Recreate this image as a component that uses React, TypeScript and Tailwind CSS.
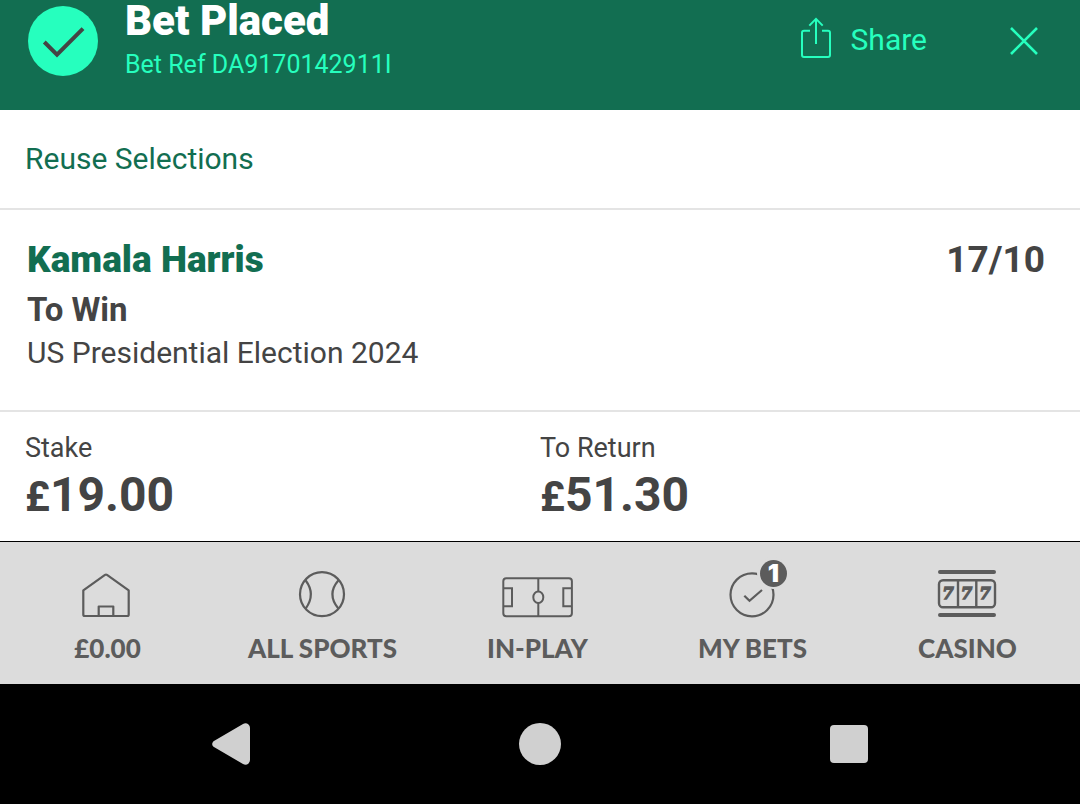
import React from 'react';

interface NavItem {
  label: string;
  icon: React.ReactNode;
  badge?: number;
}

const HomeIcon: React.FC = () => (
  <svg width="75" height="64" viewBox="0 0 75 64" fill="none" stroke="currentColor" strokeWidth="2.2" strokeLinejoin="round" aria-hidden="true">
    <path d="M13.3 34.4 L35 18.9 Q36 18.2 37 18.9 L58.7 34.4 V58.5 Q58.7 60 57.2 60 H14.8 Q13.3 60 13.3 58.5 Z" />
    <path d="M28.7 60 V50.5 H43.3 V60" />
  </svg>
);

const BallIcon: React.FC = () => (
  <svg width="75" height="64" viewBox="0 0 75 64" fill="none" stroke="currentColor" strokeWidth="2.2" aria-hidden="true">
    <circle cx="37" cy="38.2" r="22" />
    <path d="M20.7 24.5 Q31 38.2 20.7 52.5" />
    <path d="M53.3 24.5 Q41.5 38.2 53.3 52.5" />
  </svg>
);

const PitchIcon: React.FC = () => (
  <svg width="75" height="64" viewBox="0 0 75 64" fill="none" stroke="currentColor" strokeWidth="2" aria-hidden="true">
    <rect x="3.3" y="22.3" width="68.6" height="38" rx="3" />
    <path d="M38.3 22.3 V35.5 M38.3 47 V60.3" />
    <ellipse cx="38.3" cy="41.3" rx="5" ry="5.8" />
    <path d="M3.3 32.3 H12 V50.3 H3.3 M71.9 32.3 H63.3 V50.3 H71.9" />
  </svg>
);

const BetsIcon: React.FC = () => (
  <svg width="75" height="64" viewBox="0 0 75 64" fill="none" stroke="currentColor" strokeWidth="2.2" aria-hidden="true">
    <circle cx="37" cy="38.8" r="21.5" />
    <circle cx="58" cy="17" r="16" fill="#dcdcdc" stroke="none" />
    <path d="M29.3 39.7 L34.5 44.8 L47 34" />
  </svg>
);

const SlotsIcon: React.FC = () => (
  <svg width="75" height="64" viewBox="0 0 75 64" fill="none" stroke="currentColor" strokeWidth="2.4" aria-hidden="true">
    <path d="M10 16 H64 M10 59 H64" strokeWidth="4" strokeLinecap="round" />
    <rect x="9" y="24.2" width="56" height="27" rx="4" />
    <path d="M28 24 V51 M46.3 24 V51" />
    <g fill="currentColor" strokeWidth="1.5" fontFamily="DejaVu Serif, serif" fontWeight="700" fontStyle="italic" fontSize="16" textAnchor="middle">
      <text x="18" y="43">7</text>
      <text x="36.5" y="43">7</text>
      <text x="55" y="43">7</text>
    </g>
  </svg>
);

const navItems: NavItem[] = [
  { label: '£0.00', icon: <HomeIcon /> },
  { label: 'ALL SPORTS', icon: <BallIcon /> },
  { label: 'IN-PLAY', icon: <PitchIcon /> },
  { label: 'MY BETS', icon: <BetsIcon />, badge: 1 },
  { label: 'CASINO', icon: <SlotsIcon /> },
];

const Header: React.FC = () => (
  <header className="flex h-[110px] items-start bg-[#126e51] pl-7 pr-10 text-[#26ffbe]">
    <svg className="mt-1.5 shrink-0" width="70" height="70" viewBox="0 0 70 70" fill="none" aria-hidden="true">
      <circle cx="35" cy="35" r="35" fill="#26ffbe" />
      <path d="M16.3 36 L29 48.6 L55 22.6" stroke="#444" strokeWidth="4" />
    </svg>
    <div className="ml-[27px] flex-1">
      <h1 className="text-[42px] leading-[42px] font-black text-white">Bet Placed</h1>
      <p className="mt-1.5 text-[25px] leading-[33px]">Bet Ref DA9170142911I</p>
    </div>
    <button type="button" className="mt-[17px] flex items-start gap-[19px] text-[30px] leading-[46px]">
      <svg width="32" height="42" viewBox="0 0 32 42" fill="none" stroke="currentColor" strokeWidth="2" aria-hidden="true">
        <path d="M10 13.8 H4 Q2 13.8 2 15.8 V38 Q2 40 4 40 H28 Q30 40 30 38 V15.8 Q30 13.8 28 13.8 H22" />
        <path d="M16 27 V2 M9.3 8.6 L16 1.8 L22.7 8.6" />
      </svg>
      Share
    </button>
    <button type="button" aria-label="Close" className="mt-[25px] ml-[81px]">
      <svg width="32" height="32" viewBox="0 0 32 32" fill="none" stroke="currentColor" strokeWidth="2.6" aria-hidden="true">
        <path d="M3 3 L29 29 M29 3 L3 29" />
      </svg>
    </button>
  </header>
);

const Selection: React.FC = () => (
  <section className="flex items-start justify-between border-b-2 border-[#e4e4e4] pt-7 pr-[35px] pb-9 pl-[27px]">
    <div>
      <h2 className="text-[37px] leading-[44px] font-black text-[#126e51]">Kamala Harris</h2>
      <p className="mt-1.5 text-[33px] leading-[44px] font-bold">To Win</p>
      <p className="text-[30px] leading-[42px]">US Presidential Election 2024</p>
    </div>
    <span className="text-[37px] leading-[44px] font-bold">17/10</span>
  </section>
);

const Amount: React.FC<{ label: string; value: string }> = ({ label, value }) => (
  <div>
    <dt className="text-[27px] leading-8">{label}</dt>
    <dd className="text-[48px] leading-[62px] font-bold">
      <span className="text-[42px] leading-none">£</span>
      {value}
    </dd>
  </div>
);

const TabBar: React.FC = () => (
  <nav className="grid grid-cols-5 border-t border-black bg-[#dcdcdc] pt-3.5 pr-[5px] pb-5 font-['Lato',sans-serif] text-[#5c5c5c]">
    {navItems.map((item) => (
      <a key={item.label} href="#" className="flex flex-col items-center">
        <span className="relative">
          {item.icon}
          {item.badge && (
            <span className="absolute top-1 left-[45px] flex h-[27px] w-[27px] items-center justify-center rounded-full bg-[#5c5c5c] font-['Inter',sans-serif] text-[25px] leading-[27px] font-black text-white">
              {item.badge}
            </span>
          )}
        </span>
        <span className="mt-3 text-[26px] leading-8 font-black">{item.label}</span>
      </a>
    ))}
  </nav>
);

const SystemBar: React.FC = () => (
  <div className="flex min-h-[120px] flex-1 items-center justify-center gap-[269px] bg-black text-[#d0d0d0]">
    <button type="button" aria-label="Back">
      <svg width="38" height="42" viewBox="0 0 38 42" fill="currentColor" aria-hidden="true">
        <path d="M1.5 18.2 L31 1 Q34 -0.8 36.5 1.6 Q38 3 38 5 V37 Q38 39 36.5 40.4 Q34 42.8 31 41 L1.5 23.8 Q-1.2 21 1.5 18.2 Z" />
      </svg>
    </button>
    <button type="button" aria-label="Home" className="h-[42px] w-[42px] rounded-full bg-[#d0d0d0]" />
    <button type="button" aria-label="Recent apps" className="h-[38px] w-[38px] rounded-[4px] bg-[#d0d0d0]" />
  </div>
);

const App: React.FC = () => {
  return (
    <div className="flex min-h-screen flex-col bg-white font-['Roboto',sans-serif] text-[#444]">
      <Header />
      <main>
        <div className="flex h-[100px] items-center border-b-2 border-[#e4e4e4] px-[25px]">
          <button type="button" className="text-[30px] leading-9 text-[#126e51]">Reuse Selections</button>
        </div>
        <Selection />
        <dl className="grid grid-cols-2 px-[25px] pt-5 pb-[15px]">
          <Amount label="Stake" value="19.00" />
          <Amount label="To Return" value="51.30" />
        </dl>
      </main>
      <TabBar />
      <SystemBar />
    </div>
  );
};

export default App;
